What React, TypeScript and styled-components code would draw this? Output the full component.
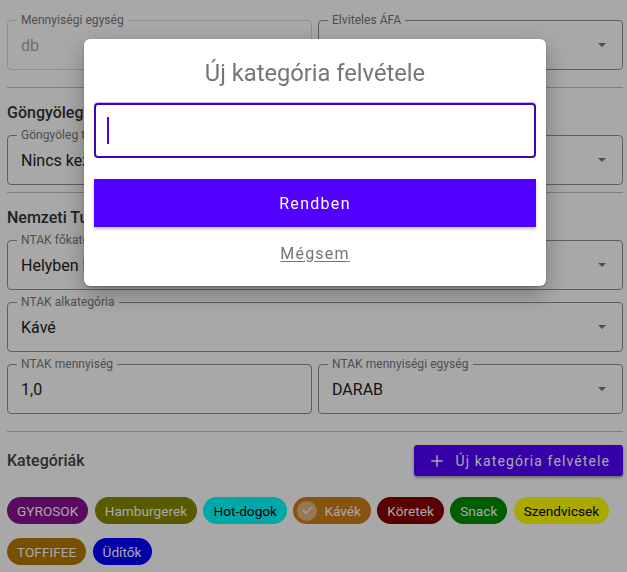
import React from "react";
import styled, { createGlobalStyle } from "styled-components";
import { Check, Plus } from "lucide-react";

const GlobalStyle = createGlobalStyle`
  html, body {
    margin: 0;
    padding: 0;
    height: 100%;
    overflow: hidden;
    background: #fff;
    font-family: Roboto, "Liberation Sans", sans-serif;
  }
  * { box-sizing: border-box; }
`;

type FieldProps = {
  label: string;
  value?: string;
  select?: boolean;
  disabled?: boolean;
};

const Field = ({ label, value, select, disabled }: FieldProps) => (
  <FieldBox $disabled={disabled}>
    <FieldLegend>{label}</FieldLegend>
    <FieldValue $disabled={disabled}>{value}</FieldValue>
    {select && <Arrow />}
  </FieldBox>
);

const chips = [
  { name: "GYROSOK", bg: "#880e8f", fg: "#fff" },
  { name: "Hamburgerek", bg: "#888800", fg: "#fff" },
  { name: "Hot-dogok", bg: "#00ffff", fg: "#000" },
  { name: "Kávék", bg: "#cd7f18", fg: "#fff", selected: true },
  { name: "Köretek", bg: "#880000", fg: "#fff" },
  { name: "Snack", bg: "#008f00", fg: "#fff" },
  { name: "Szendvicsek", bg: "#ffff00", fg: "#000" },
  { name: "TOFFIFEE", bg: "#b87800", fg: "#fff" },
  { name: "Üdítők", bg: "#0000ff", fg: "#fff" },
];

const App = () => (
  <>
    <GlobalStyle />
    <Page>
      <Row>
        <Field label="Mennyiségi egység" value="db" disabled />
        <Field label="Elviteles ÁFA" select />
      </Row>
      <Divider />
      <SectionTitle>Göngyöleg</SectionTitle>
      <Field label="Göngyöleg típus" value="Nincs kezelve" select />
      <Divider $tight />
      <SectionTitle>Nemzeti Turisztikai Adatközpont</SectionTitle>
      <Stack>
        <Field label="NTAK főkategória" value="Helyben készített" select />
        <Field label="NTAK alkategória" value="Kávé" select />
        <Row>
          <Field label="NTAK mennyiség" value="1,0" />
          <Field label="NTAK mennyiségi egység" value="DARAB" select />
        </Row>
      </Stack>
      <Divider />
      <CategoryHeader>
        <CategoryTitle>Kategóriák</CategoryTitle>
        <AddButton>
          <Plus size={18} strokeWidth={2} />
          Új kategória felvétele
        </AddButton>
      </CategoryHeader>
      <ChipList>
        {chips.map((chip) => (
          <Chip key={chip.name} $bg={chip.bg} $fg={chip.fg} $selected={chip.selected}>
            {chip.selected && (
              <ChipCheck>
                <Check size={13} strokeWidth={2} />
              </ChipCheck>
            )}
            {chip.name}
          </Chip>
        ))}
      </ChipList>
    </Page>
    <Scrim>
      <Dialog>
        <DialogTitle>Új kategória felvétele</DialogTitle>
        <DialogInput>
          <Caret />
        </DialogInput>
        <OkButton>Rendben</OkButton>
        <CancelButton>Mégsem</CancelButton>
      </Dialog>
    </Scrim>
  </>
);

const Page = styled.main`
  height: 572px;
  overflow: hidden;
  padding: 14px 4px 0 7px;
  display: flex;
  flex-direction: column;
`;

const Row = styled.div`
  display: grid;
  grid-template-columns: 305px 305px;
  column-gap: 6px;
`;

const Stack = styled.div`
  display: flex;
  flex-direction: column;
  gap: 6px;
`;

const FieldBox = styled.fieldset<{ $disabled?: boolean }>`
  position: relative;
  height: 56px;
  min-width: 0;
  margin: 0;
  padding: 0 13px;
  border: 1px solid ${({ $disabled }) => ($disabled ? "#d8d8d8" : "#8f8f8f")};
  border-radius: 4px;
`;

const FieldLegend = styled.legend`
  margin-left: -4px;
  padding: 0 4px;
  font-size: 12px;
  line-height: 12px;
  letter-spacing: 0.05px;
  color: #777;
`;

const FieldValue = styled.div<{ $disabled?: boolean }>`
  margin-top: 10px;
  font-size: 16px;
  line-height: 20px;
  color: ${({ $disabled }) => ($disabled ? "#a8a8a8" : "#222")};
`;

const Arrow = styled.span`
  position: absolute;
  right: 16px;
  top: 17px;
  width: 0;
  height: 0;
  border-left: 4.5px solid transparent;
  border-right: 4.5px solid transparent;
  border-top: 4.5px solid #757575;
`;

const Divider = styled.hr<{ $tight?: boolean }>`
  width: 100%;
  height: 1px;
  margin: ${({ $tight }) => ($tight ? "7px 0 0" : "17px 0 0")};
  border: 0;
  background: #bdbdbd;
`;

const SectionTitle = styled.h3`
  margin: 14.5px 0 6.5px;
  font-size: 16px;
  line-height: 20px;
  font-weight: 500;
  color: #333;
`;

const CategoryHeader = styled.div`
  display: flex;
  align-items: center;
  justify-content: space-between;
  margin-top: 13px;
`;

const CategoryTitle = styled.h3`
  margin: 0;
  font-size: 16px;
  line-height: 20px;
  font-weight: 500;
  color: #444;
`;

const AddButton = styled.button`
  display: flex;
  align-items: center;
  gap: 10px;
  height: 31px;
  padding: 0 13px 0 14px;
  border: 0;
  border-radius: 3px;
  background: #5200ff;
  color: #fff;
  font-family: inherit;
  font-size: 14px;
  letter-spacing: 1.1px;
  box-shadow: 0 2px 3px rgba(0, 0, 0, 0.35);
`;

const ChipList = styled.div`
  display: flex;
  flex-wrap: wrap;
  gap: 14px 6.4px;
  margin-top: 21px;
  padding-right: 8px;
`;

const Chip = styled.span<{ $bg: string; $fg: string; $selected?: boolean }>`
  display: inline-flex;
  align-items: center;
  gap: 7px;
  height: 27px;
  padding: 0 10px 0 ${({ $selected }) => ($selected ? "4px" : "10px")};
  border-radius: 14px;
  background: ${({ $bg }) => $bg};
  color: ${({ $fg }) => $fg};
  font-size: 13.65px;
`;

const ChipCheck = styled.span`
  display: flex;
  align-items: center;
  justify-content: center;
  width: 20px;
  height: 20px;
  border-radius: 50%;
  background: rgba(255, 255, 255, 0.45);
  color: #fff;
`;

const Scrim = styled.div`
  position: fixed;
  inset: 0;
  background: rgba(0, 0, 0, 0.34);
`;

const Dialog = styled.div`
  position: absolute;
  left: 84px;
  top: 39px;
  width: 462px;
  height: 247px;
  padding: 0 10px;
  display: flex;
  flex-direction: column;
  border-radius: 6px;
  background: #fff;
  box-shadow: 0 8px 24px rgba(0, 0, 0, 0.3), 0 1px 2px rgba(0, 0, 0, 0.3);
`;

const DialogTitle = styled.h2`
  margin: 18px 0 14px;
  font-size: 23.7px;
  line-height: 32px;
  font-weight: 400;
  text-align: center;
  color: #757575;
`;

const DialogInput = styled.div`
  display: flex;
  align-items: center;
  height: 55px;
  padding-left: 11px;
  border: 2px solid #3f06b8;
  border-radius: 4px;
  box-shadow: 0 -1px 0 #c9aeff;
`;

const Caret = styled.span`
  width: 2px;
  height: 27px;
  background: #4b00e0;
`;

const OkButton = styled.button`
  height: 48px;
  margin-top: 21px;
  border: 0;
  background: #5200ff;
  color: #fff;
  font-family: inherit;
  font-size: 16px;
  letter-spacing: 1.3px;
  box-shadow: 0 2px 3px rgba(0, 0, 0, 0.25);
`;

const CancelButton = styled.button`
  margin-top: 16px;
  padding: 0;
  border: 0;
  background: none;
  color: #757575;
  font-family: inherit;
  font-size: 16px;
  line-height: 22px;
  letter-spacing: 1.2px;
  text-decoration: underline;
  text-underline-offset: 2px;
`;

export default App;
